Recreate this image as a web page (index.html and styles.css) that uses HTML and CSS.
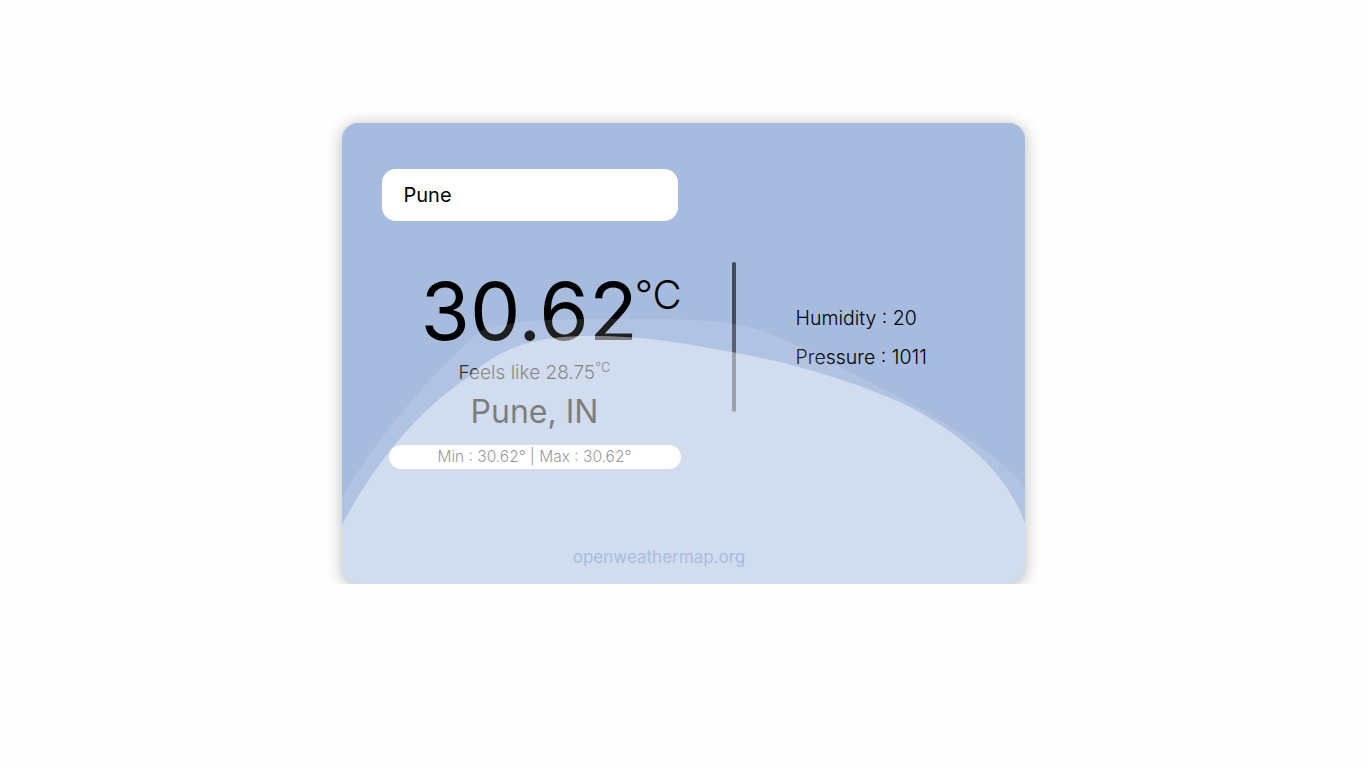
FILE: index.html
```html
<!DOCTYPE html>
<html lang="en">
<head>
    <meta charset="UTF-8">
    <meta name="viewport" content="width=device-width, initial-scale=1.0">
    <title>Weather</title>
    <link rel="stylesheet" href="styles.css">
</head>
<body>
    <div class="weather-card">
        <input class="search" type="text" value="Pune">

        <div class="weather-main">
            <div class="weather-left">
                <div class="temp">30.62<sup>°C</sup></div>
                <div class="feels">Feels like 28.75<sup>°C</sup></div>
                <div class="city">Pune, IN</div>
                <div class="min-max">Min : 30.62° | Max : 30.62°</div>
            </div>
            <div class="divider"></div>
            <div class="weather-right">
                <div class="stat">Humidity : 20</div>
                <div class="stat">Pressure : 1011</div>
            </div>
        </div>

        <div class="source">openweathermap.org</div>

        <!-- wave overlay, sits over the content -->
        <svg class="waves" viewBox="0 0 683 461" preserveAspectRatio="none">
            <path class="wave-back" d="M0,374 C35,315 85,255 138,208 C170,197 210,196 260,196 C320,196 350,195 392,201 C440,210 480,235 518,254 C590,290 650,325 683,364 L683,461 L0,461 Z"/>
            <path class="wave-front" d="M0,402 C35,335 82,283 125,255 C150,232 180,214 240,213 C300,212 340,220 390,229 C450,240 510,258 560,280 C620,310 665,350 683,400 L683,461 L0,461 Z"/>
        </svg>
    </div>
</body>
</html>
```

FILE: styles.css
```css
body {
    font-family: Inter, "Noto Sans", sans-serif;
    margin: 0;
    background-color: #fefefe;
}
.weather-card {
    position: relative;
    width: 683px;
    height: 461px;
    box-sizing: border-box;
    margin: 123px auto 0;
    padding: 46px 40px 0 40px;
    background-color: #a6bbde;
    border-radius: 16px;
    box-shadow: 0 2px 16px rgba(0,0,0,0.28);
    overflow: hidden;
    display: flex;
    flex-direction: column;
}
.search {
    width: 296px;
    height: 52px;
    box-sizing: border-box;
    border: none;
    outline: none;
    border-radius: 14px;
    padding: 0 22px;
    font-family: inherit;
    font-size: 20px;
    color: black;
    background: white;
}
.weather-main {
    display: flex;
    align-items: flex-start;
    margin-top: 41px;
}
.weather-left {
    width: 292px;
    margin-left: 7px;
    text-align: center;
}
.temp {
    margin-top: 9px;
    padding-left: 32px;
    font-size: 80px;
    line-height: 80px;
    color: black;
}
.temp sup {
    margin-left: -3px;
    font-size: 40px;
    font-weight: 300;
    vertical-align: top;
    line-height: 1;
    position: relative;
    top: 4px;
}
.feels {
    margin-top: 10px;
    font-size: 19px;
    font-weight: 300;
    line-height: 24px;
    color: #111;
}
.feels sup {
    font-size: 13px;
    vertical-align: top;
    line-height: 1;
}
.city {
    margin-top: 9px;
    font-size: 32px;
    line-height: 36px;
    color: black;
}
.min-max {
    margin-top: 15px;
    height: 24px;
    line-height: 24px;
    background-color: white;
    border-radius: 12px;
    font-size: 15.5px;
    font-weight: 300;
    color: #333;
}
.divider {
    width: 4px;
    height: 150px;
    margin-left: 51px;
    border-radius: 2px;
    background-color: #434a57;
}
.weather-right {
    margin-left: 60px;
    margin-top: 44px;
}
.stat {
    font-size: 19.5px;
    font-weight: 300;
    line-height: 24px;
    color: black;
}
.stat + .stat {
    margin-top: 15px;
}
.source {
    position: relative;
    z-index: 2;
    margin-top: auto;
    padding: 0 48px 15px 0;
    text-align: center;
    font-size: 17px;
    line-height: 24px;
    color: #a8bde1;
}
.waves {
    position: absolute;
    left: 0;
    top: 0;
    width: 100%;
    height: 100%;
    z-index: 1;
    pointer-events: none;
}
.wave-back {
    fill: rgba(255,255,255,0.12);
}
.wave-front {
    fill: rgba(255,255,255,0.42);
}
```
